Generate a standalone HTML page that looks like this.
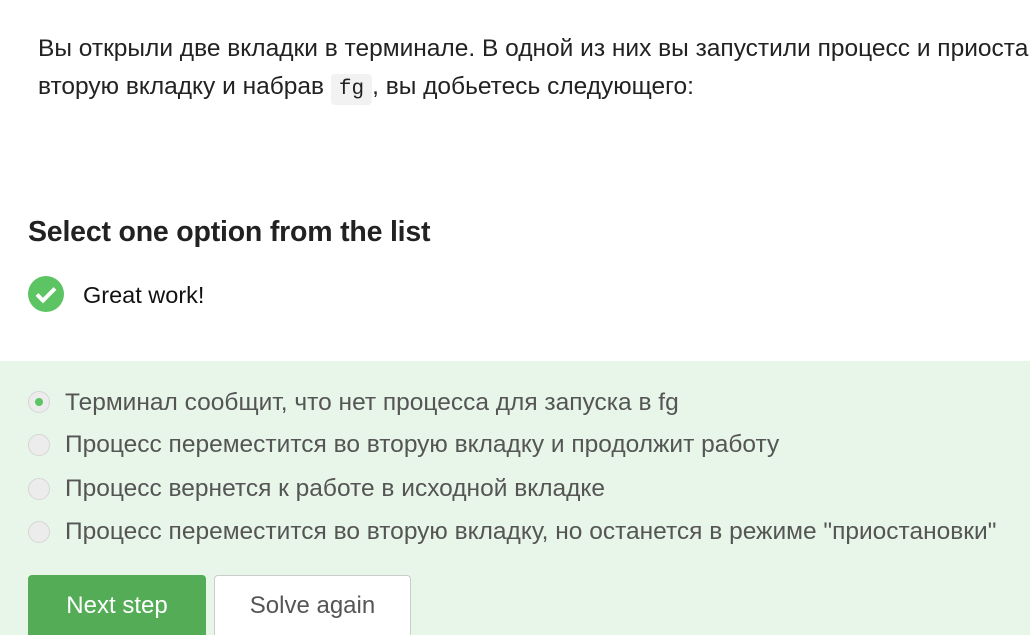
<!DOCTYPE html>
<html style="overflow:hidden;width:1030px;height:635px"><head><meta charset="utf-8"><style>
body{margin:0;width:1030px;height:635px;overflow:hidden;background:#fff;font-family:"Liberation Sans",sans-serif;position:relative}
.t{position:absolute;left:38px;top:30px;width:992px;overflow:hidden;font-size:24.5px;line-height:38px;color:#222;white-space:nowrap}
code{font-family:"Liberation Mono",monospace;background:#f2f2f2;border-radius:4px;padding:4px 8px;font-size:21px}
h2{position:absolute;left:28px;top:216px;margin:0;font-size:28.5px;font-weight:bold;color:#222;letter-spacing:-0.2px}
.ok{position:absolute;left:28px;top:276px}
.gw{position:absolute;left:83px;top:282px;font-size:23.5px;color:#111}
.g{position:absolute;left:0;top:361px;width:1030px;height:274px;background:#e8f6e9}
.o{position:absolute;left:65px;font-size:24.5px;color:#555;white-space:nowrap}
.r{position:absolute;left:28px;width:22px;height:22px;border-radius:50%;background:#ececec;border:1px solid #d6d6d6;box-sizing:border-box}
.r.s::after{content:"";position:absolute;left:6px;top:6px;width:8px;height:8px;border-radius:50%;background:#5cc463}
.b1{position:absolute;left:28px;top:575px;width:178px;height:60px;background:#54ad56;border-radius:4px 4px 0 0;color:#fff;font-size:24px;text-align:center;line-height:62px}
.b2{position:absolute;left:214px;top:575px;width:197px;height:60px;background:#fff;border:1px solid #ccc;border-bottom:none;box-sizing:border-box;border-radius:4px 4px 0 0;color:#555;font-size:24px;text-align:center;line-height:60px}
</style></head><body>
<div class="t">Вы открыли две вкладки в терминале. В одной из них вы запустили процесс и приостановили его. Перейдя во<br>вторую вкладку и набрав <code>fg</code>, вы добьетесь следующего:</div>
<h2>Select one option from the list</h2>
<svg class="ok" width="36" height="36" viewBox="0 0 36 36"><circle cx="18" cy="18" r="18" fill="#5cc463"/><path d="M9 18.5l6 6 12-12" stroke="#fff" stroke-width="4" fill="none"/></svg>
<div class="gw">Great work!</div>
<div class="g"></div>
<div class="r s" style="top:391px"></div><div class="o" style="top:389px">Терминал сообщит, что нет процесса для запуска в fg</div>
<div class="r" style="top:434px"></div><div class="o" style="top:431px">Процесс переместится во вторую вкладку и продолжит работу</div>
<div class="r" style="top:478px"></div><div class="o" style="top:475px">Процесс вернется к работе в исходной вкладке</div>
<div class="r" style="top:521px"></div><div class="o" style="top:518px">Процесс переместится во вторую вкладку, но останется в режиме "приостановки"</div>
<div class="b1">Next step</div>
<div class="b2">Solve again</div>
</body></html>
